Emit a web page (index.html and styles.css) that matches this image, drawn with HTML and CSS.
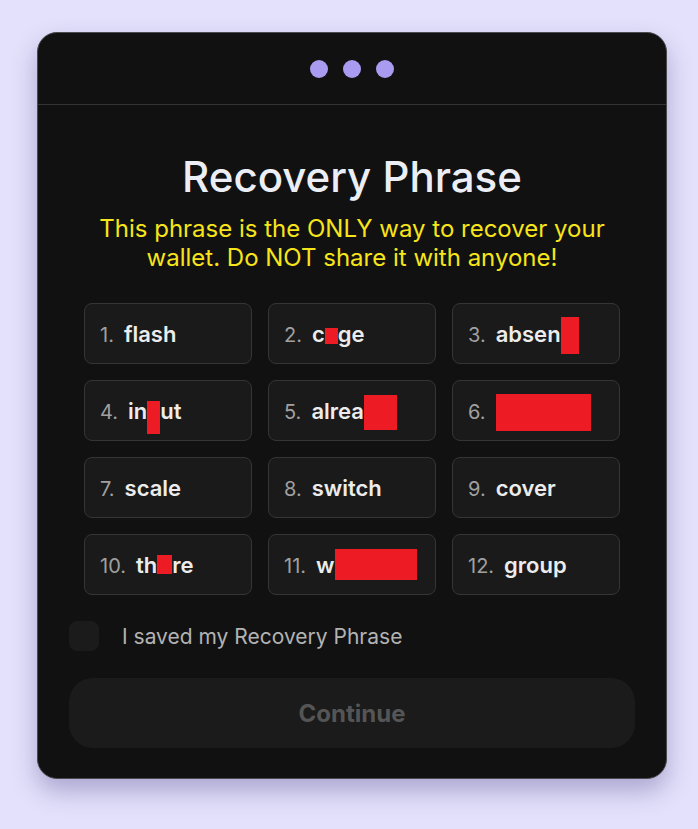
FILE: index.html
```html
<!DOCTYPE html>
<html>
<head>
<meta charset="utf-8">
<link rel="stylesheet" href="styles.css">
</head>
<body>
<div class="card">
  <div class="header">
    <span class="dot"></span><span class="dot"></span><span class="dot"></span>
  </div>
  <div class="content">
    <h1 class="title">Recovery Phrase</h1>
    <p class="warning">This phrase is the ONLY way to recover your wallet. Do NOT share it with anyone!</p>
    <div class="grid">
      <div class="cell"><span class="num">1.</span><span class="word">flash</span></div>
      <div class="cell"><span class="num">2.</span><span class="word">c<span class="redact r2"></span>ge</span></div>
      <div class="cell"><span class="num">3.</span><span class="word">absen<span class="redact r3"></span></span></div>
      <div class="cell"><span class="num">4.</span><span class="word">in<span class="redact r4"></span>ut</span></div>
      <div class="cell"><span class="num">5.</span><span class="word">alrea<span class="redact r5"></span></span></div>
      <div class="cell"><span class="num">6.</span><span class="word"><span class="redact r6"></span></span></div>
      <div class="cell"><span class="num">7.</span><span class="word">scale</span></div>
      <div class="cell"><span class="num">8.</span><span class="word">switch</span></div>
      <div class="cell"><span class="num">9.</span><span class="word">cover</span></div>
      <div class="cell"><span class="num">10.</span><span class="word">th<span class="redact r10"></span>re</span></div>
      <div class="cell"><span class="num">11.</span><span class="word">w<span class="redact r11"></span></span></div>
      <div class="cell"><span class="num">12.</span><span class="word">group</span></div>
    </div>
  </div>
  <div class="footer">
    <label class="check-row"><span class="checkbox"></span><span class="check-label">I saved my Recovery Phrase</span></label>
    <button class="continue" type="button">Continue</button>
  </div>
</div>
</body>
</html>
```
FILE: styles.css
```css
html, body {
  margin: 0;
  padding: 0;
}
body {
  background: #e3e1fb;
  padding: 32px 0 0 37px;
  height: 829px;
  box-sizing: border-box;
  font-family: Inter, "Noto Sans", sans-serif;
}
.card {
  width: 630px;
  height: 747px;
  box-sizing: border-box;
  background: #111111;
  border: 1px solid #4a4a4f;
  border-radius: 20px;
  box-shadow: 0 12px 24px rgba(70, 60, 130, 0.35);
  display: flex;
  flex-direction: column;
  overflow: hidden;
}
.header {
  height: 72px;
  flex: none;
  box-sizing: border-box;
  border-bottom: 1px solid #333;
  display: flex;
  align-items: center;
  justify-content: center;
  gap: 15px;
  padding-top: 1px;
}
.dot {
  width: 18px;
  height: 18px;
  border-radius: 50%;
  background: #a99cf0;
}
.content {
  padding: 0 46px;
}
.title {
  margin: 47px 0 0;
  font-size: 42px;
  line-height: 50px;
  font-weight: 500;
  color: #eceef5;
  text-align: center;
}
.warning {
  margin: 12px 0 0;
  font-size: 24px;
  line-height: 29px;
  color: #f7e51a;
  text-align: center;
}
.grid {
  margin-top: 31px;
  display: grid;
  grid-template-columns: repeat(3, 168px);
  column-gap: 16px;
  row-gap: 16px;
}
.cell {
  height: 61px;
  box-sizing: border-box;
  background: #1a1a1a;
  border: 1px solid #353535;
  border-radius: 8px;
  display: flex;
  align-items: baseline;
  padding: 17px 15px 0;
  gap: 10px;
}
.num {
  font-size: 20px;
  line-height: 26px;
  color: #a0a0a0;
}
.word {
  font-size: 22px;
  line-height: 26px;
  font-weight: 600;
  color: #ececec;
  white-space: nowrap;
}
.redact {
  display: inline-block;
  background: #ed1c24;
}
.r2 { width: 13px; height: 16px; margin: -14px 0 -2px; }
.r3 { width: 18px; height: 37px; margin: -25px 0 -12px; }
.r4 { width: 13px; height: 33px; margin: -18px 0 -15px; }
.r5 { width: 33px; height: 35px; margin: -24px 0 -11px; }
.r6 { width: 95px; height: 37px; margin: -25px 0 -12px; }
.r10 { width: 15px; height: 19px; margin: -18px 0 -1px; }
.r11 { width: 82px; height: 31px; margin: -24px 0 -7px; }
.footer {
  margin-top: auto;
  padding: 0 31px 30px;
}
.check-row {
  display: flex;
  align-items: center;
  gap: 23px;
}
.checkbox {
  width: 30px;
  height: 30px;
  border-radius: 8px;
  background: #1b1b1b;
}
.check-label {
  font-size: 21px;
  color: #b3b3b3;
}
.continue {
  margin-top: 27px;
  width: 100%;
  height: 70px;
  border: none;
  border-radius: 24px;
  background: #1b1b1b;
  color: #555;
  font-family: Inter, "Noto Sans", sans-serif;
  font-weight: 700;
  font-size: 24px;
  display: block;
}
```
